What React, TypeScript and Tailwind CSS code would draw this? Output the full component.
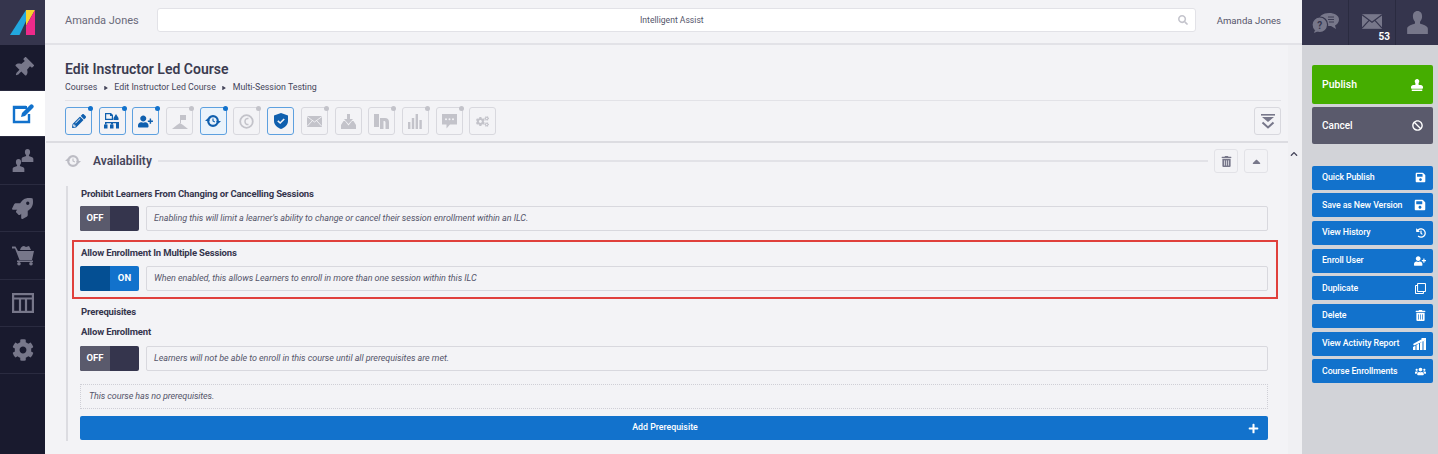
import { FaCog, FaPencilAlt, FaUserPlus, FaHistory, FaTrashAlt, FaCaretUp, FaChevronUp, FaSearch, FaBan, FaStamp, FaSave, FaRegClone, FaPlus, FaPlay, FaUsers, FaThumbtack, FaRocket, FaCogs } from "react-icons/fa";
import type { ReactNode } from "react";

function Logo() {
  return (
    <svg width="25" height="27" viewBox="0 0 25 27">
      <polygon points="0,26 9.5,26 16,12 16,1" fill="#22a7de" />
      <polygon points="16,1 25,1 16,17" fill="#f6d32d" />
      <polygon points="16,17 25,1 25,26 16,26" fill="#ee2a8a" />
    </svg>
  );
}

// head and shoulders, used all over the app
function Bust({ size = 20, x = 0, y = 0 }: { size?: number; x?: number; y?: number }) {
  return (
    <svg x={x} y={y} width={size} height={size} viewBox="0 0 20 20" fill="currentColor">
      <path d="M10 0c-2.600 0-4 2-4 4.600 0 2 .7 3.600 1.800 4.700v1.600C6 12 1 12.400 1 15.500V20h18v-4.500c0-3.100-5-3.500-6.800-4.600V9.300C13.300 8.200 14 6.600 14 4.600 14 2 12.600 0 10 0z" />
    </svg>
  );
}

function TwoBusts() {
  return (
    <svg width="22" height="23" viewBox="0 0 22 23" fill="currentColor">
      <Bust size={13} x={9} y={0} />
      <Bust size={13} x={0} y={10} />
    </svg>
  );
}

function EditBox() {
  return (
    <svg width="22" height="21" viewBox="0 0 22 21" fill="none">
      <path d="M17 11v8H2V4h12" stroke="currentColor" strokeWidth="2.400" />
      <path d="M1 3h14v3H1z" fill="currentColor" />
      <path d="M9 14l1-4 8-8c1-1 2-1 3 0s1 2 0 3l-8 8z" fill="currentColor" />
    </svg>
  );
}

function Cart() {
  return (
    <svg width="22" height="21" viewBox="0 0 22 21" fill="currentColor">
      <path d="M0 1.500h3.500L6 6h16l-2 9H7.500L3 3.500H0z" />
      <path d="M8 5c1-3 2-4 4-4l2 1 3-1 2 4z" />
      <path d="M5 15.500h16v1.500H5z" />
      <circle cx="7" cy="18.800" r="1.800" />
      <circle cx="19" cy="18.800" r="1.800" />
    </svg>
  );
}

function Columns() {
  return (
    <svg width="22" height="20" viewBox="0 0 22 20" fill="none" stroke="currentColor" strokeWidth="2.200">
      <rect x="1.100" y="1.100" width="19.800" height="17.800" />
      <path d="M1 5.500h20M8 5v14M14 5v14" />
    </svg>
  );
}

function SitemapDoc() {
  return (
    <svg width="16" height="16" viewBox="0 0 16 16" fill="currentColor">
      <path d="M1 0h6l2 2v5H1zM2.200 1.200v4.600h5.600V3H6V1.200z" fillRule="evenodd" />
      <path d="M12 1l2.500 4v2h-5V5z" />
      <path d="M1 9h13v1.200H9v1.300H7v-1.300H2.500v1.300H1z" />
      <rect x="0" y="11.500" width="3.500" height="4" />
      <rect x="6" y="11.500" width="3.500" height="4" />
      <rect x="12" y="9" width="3" height="6.500" />
    </svg>
  );
}

function FlagHill() {
  return (
    <svg width="16" height="15" viewBox="0 0 16 15" fill="currentColor">
      <path d="M8 1h6v5H9v3H8z" />
      <path d="M0 15l5-4 3-2 3 2 5 4z" />
    </svg>
  );
}

function SyncClock() {
  return (
    <svg width="16" height="14" viewBox="0 0 16 14" fill="none" stroke="currentColor">
      <circle cx="8" cy="7" r="4.800" strokeWidth="2.200" />
      <path d="M8 4.500V7l1.800 1" strokeWidth="1.100" />
      <path d="M0 7l2.500-2.500L5 7zM11 7l2.500 2.500L16 7z" fill="currentColor" stroke="none" />
    </svg>
  );
}

function Coin() {
  return (
    <svg width="15" height="15" viewBox="0 0 15 15" fill="none" stroke="currentColor">
      <circle cx="7.500" cy="7.500" r="6.300" strokeWidth="1.800" />
      <path d="M9.500 4.500C7.500 4 6 5.500 6 7.500s1.500 3.500 3.500 3" strokeWidth="1.500" />
    </svg>
  );
}

function Shield() {
  return (
    <svg width="14" height="16" viewBox="0 0 14 16" fill="currentColor">
      <path d="M7 0l7 2.500V8c0 4-3.500 6.800-7 8-3.500-1.200-7-4-7-8V2.500z" />
      <path d="M3.800 7.800L6.200 10l4-4" fill="none" stroke="#f3f3f6" strokeWidth="1.600" />
    </svg>
  );
}

function Mail({ w = 15, h = 11, stroke = "#f3f3f6" }: { w?: number; h?: number; stroke?: string }) {
  return (
    <svg width={w} height={h} viewBox="0 0 15 11" fill="currentColor">
      <rect width="15" height="11" />
      <path d="M0 .500l7.500 5.500L15 .500M0 10.500l5.500-6M15 10.500l-5.500-6" fill="none" stroke={stroke} strokeWidth="0.900" />
    </svg>
  );
}

function TrayDown() {
  return (
    <svg width="15" height="15" viewBox="0 0 15 15" fill="currentColor">
      <path d="M6 0h3v5h3L7.500 10 3 5h3z" />
      <path d="M2.500 7H4l3.500 4.500L11 7h1.500L15 11v4H0v-4z" />
    </svg>
  );
}

function LinkedBlock() {
  return (
    <svg width="15" height="15" viewBox="0 0 15 15" fill="currentColor">
      <rect x="0" y="0" width="5" height="13" />
      <path d="M6 4h5c2.500 0 4 1.500 4 4v7h-3.500V8.500c0-1-.5-1.500-1.500-1.500H9.500v8H6z" />
    </svg>
  );
}

function Bars() {
  return (
    <svg width="14" height="15" viewBox="0 0 14 15" fill="currentColor">
      <rect x="0" y="8" width="2.400" height="7" />
      <rect x="3.800" y="4" width="2.400" height="11" />
      <rect x="7.600" y="0" width="2.400" height="15" />
      <rect x="11.400" y="6" width="2.400" height="9" />
    </svg>
  );
}

function CommentBox() {
  return (
    <svg width="15" height="15" viewBox="0 0 15 15" fill="currentColor">
      <path d="M0 0h15v10.500H8L4.500 14.500v-4H0z" />
      <circle cx="4" cy="5.300" r="1" fill="#f3f3f6" />
      <circle cx="7.500" cy="5.300" r="1" fill="#f3f3f6" />
      <circle cx="11" cy="5.300" r="1" fill="#f3f3f6" />
    </svg>
  );
}

function DoubleDown() {
  return (
    <svg width="14" height="15" viewBox="0 0 14 15" fill="none" stroke="currentColor">
      <path d="M0 .800h14" strokeWidth="1.600" />
      <path d="M1 3h12L7 8z" fill="currentColor" stroke="none" />
      <path d="M1.500 8.500L7 13.500l5.500-5" strokeWidth="2" />
    </svg>
  );
}

function ChatHelp() {
  return (
    <svg width="27" height="21" viewBox="0 0 27 21" fill="currentColor">
      <path d="M7 8c0-4 4-7 10-7 5.500 0 10 2.500 10 6.500 0 3-2 5-4 6l1 3.500-5-3c-1 0-3 0-4-.5z" />
      <path d="M16 5h6M16 7.500h6M17 10h5" stroke="#35354d" strokeWidth="0.900" fill="none" />
      <circle cx="7.800" cy="12.800" r="7.800" stroke="#35354d" strokeWidth="1.200" />
      <path d="M3 18l-1 3 4-1.800z" />
      <text x="7.800" y="16.500" textAnchor="middle" fontSize="10" fontWeight="700" fill="#35354d" fontFamily="Roboto, sans-serif">?</text>
    </svg>
  );
}

function ActivityBars() {
  return (
    <svg width="13" height="12" viewBox="0 0 13 12" fill="currentColor">
      <path d="M0 9l2.500-1.500V12H0zM3.500 7l2.500-1.500V12H3.500zM7 5l2.500-1.500V12H7zM10.500 3L13 1.500V12h-2.500z" />
      <path d="M0 6l9-5-1-1h5v3.500l-1-1L1 7.500z" />
    </svg>
  );
}

const navItems = [
  { icon: <FaThumbtack size={20} className="rotate-45" />, h: "h-[46px]" },
  { icon: <EditBox />, h: "h-[46px]", active: true },
  { icon: <TwoBusts />, h: "h-[48px]" },
  { icon: <FaRocket size={21} />, h: "h-[47px]" },
  { icon: <Cart />, h: "h-[48px]" },
  { icon: <Columns />, h: "h-[47px]" },
  { icon: <FaCog size={22} />, h: "h-[47px]" },
];

const tools: { icon: ReactNode; on?: boolean; dot?: boolean; tint?: boolean }[] = [
  { icon: <FaPencilAlt size={14} />, on: true, dot: true },
  { icon: <SitemapDoc />, on: true, dot: true },
  { icon: <FaUserPlus size={15} />, on: true, dot: true },
  { icon: <FlagHill />, dot: true },
  { icon: <SyncClock />, on: true, dot: true, tint: true },
  { icon: <Coin />, dot: true },
  { icon: <Shield />, on: true },
  { icon: <Mail />, dot: true },
  { icon: <TrayDown /> },
  { icon: <LinkedBlock />, dot: true },
  { icon: <Bars />, dot: true },
  { icon: <CommentBox />, dot: true },
  { icon: <FaCogs size={13} /> },
];

const actions = [
  { label: "Quick Publish", icon: <FaSave size={11} /> },
  { label: "Save as New Version", icon: <FaSave size={12} /> },
  { label: "View History", icon: <FaHistory size={10} /> },
  { label: "Enroll User", icon: <FaUserPlus size={12} /> },
  { label: "Duplicate", icon: <FaRegClone size={11} /> },
  { label: "Delete", icon: <FaTrashAlt size={11} /> },
  { label: "View Activity Report", icon: <ActivityBars /> },
  { label: "Course Enrollments", icon: <FaUsers size={11} /> },
];

function Toggle({ on }: { on?: boolean }) {
  if (on) {
    return (
      <div className="flex h-[25px] w-[59px] shrink-0 overflow-hidden rounded-[2px] bg-[#1272cc] text-[9.5px] font-bold text-white">
        <div className="w-[30px] bg-[#044f93]" />
        <div className="flex flex-1 items-center justify-center">ON</div>
      </div>
    );
  }
  return (
    <div className="flex h-[25px] w-[59px] shrink-0 overflow-hidden rounded-[2px] bg-[#35354d] text-[9.5px] font-bold text-white">
      <div className="flex w-[30px] items-center justify-center bg-[#5a5a6c]">OFF</div>
    </div>
  );
}

function OptionRow({ on, text }: { on?: boolean; text: string }) {
  return (
    <div className="flex gap-[7px]">
      <Toggle on={on} />
      <div className="flex h-[25px] flex-1 items-center rounded-[2px] border border-[#d8d8de] px-[7px] text-[9px] italic tracking-[-0.05px] text-[#55556a]">
        {text}
      </div>
    </div>
  );
}

const fieldTitle = "pl-[1px] text-[9.5px] font-bold leading-[13px] tracking-[-0.15px] text-[#35354d]";

export default function App() {
  return (
    <div className="flex h-[454px] w-[1438px] overflow-hidden bg-[#f3f3f6] font-['Roboto',sans-serif] text-[#35354d]">
      <aside className="flex w-[45px] shrink-0 flex-col bg-[#191a2e] text-[#77778a]">
        <div className="flex h-[45px] items-center justify-center bg-[#35354d]">
          <Logo />
        </div>
        {navItems.map((item, i) => (
          <div
            key={i}
            className={`flex items-center justify-center border-b border-[#2a2b40] ${item.h} ${item.active ? "bg-white text-[#1272cc]" : ""}`}
          >
            {item.icon}
          </div>
        ))}
      </aside>

      <div className="flex min-w-0 flex-1 flex-col">
        <header className="flex h-[45px] shrink-0 items-center border-b-2 border-[#e2e2e7] pl-[20px] pr-[21px]">
          <span className="w-[92px] text-[11px] text-[#6a6a7a]">Amanda Jones</span>
          <div className="relative -mt-[3px] flex h-[24px] flex-1 items-center justify-center rounded-[3px] border border-[#e2e2e7] bg-white pr-[9px] text-[8.6px] text-[#55556a]">
            Intelligent Assist
            <FaSearch size={10} className="absolute right-[7px] top-[6px] text-[#c4c4cc]" />
          </div>
          <span className="ml-[21px] text-[9.6px] text-[#55556a]">Amanda Jones</span>
        </header>

        <div className="flex min-h-0 flex-1">
          <main className="min-w-0 flex-1">
            <div className="pl-[20px] pr-[7px]">
              <h1 className="mt-[15px] text-[14px] font-semibold leading-[18px] text-[#3b3b50]">Edit Instructor Led Course</h1>
              <div className="mt-[3px] flex items-center gap-[6.5px] text-[8.8px] leading-[13px] text-[#45455a]">
                <span>Courses</span>
                <FaPlay size={4} />
                <span>Edit Instructor Led Course</span>
                <FaPlay size={4} />
                <span>Multi-Session Testing</span>
              </div>
              <div className="mt-[6px] flex items-center gap-[6.7px] border-t border-[#e2e2e7] pt-[6px]">
                {tools.map((t, i) => (
                  <div
                    key={i}
                    className={`relative flex h-[28px] w-[27px] items-center justify-center rounded-[3px] border ${
                      t.on ? "border-[#5da0df] text-[#0f5fae]" : "border-[#d8d8de] text-[#c3c3ca]"
                    } ${t.tint ? "bg-[#eaf3fb]" : ""}`}
                  >
                    {t.icon}
                    {t.dot && (
                      <span className={`absolute -right-[2px] -top-[2px] h-[5px] w-[5px] rounded-full ${t.on ? "bg-[#1272cc]" : "bg-[#c3c3ca]"}`} />
                    )}
                  </div>
                ))}
                <div className="ml-auto flex h-[28px] w-[27px] items-center justify-center rounded-[3px] border border-[#d8d8de] text-[#77778a]">
                  <DoubleDown />
                </div>
              </div>
            </div>

            <div className="ml-[1px] mt-[6px] border-t-2 border-[#dcdce1] pl-[19px] pr-[20px]">
              <div className="flex h-[36px] items-center">
                <span className="text-[#bcbcc4]">
                  <SyncClock />
                </span>
                <span className="ml-[12px] text-[12px] font-semibold text-[#45455a]">Availability</span>
                <div className="ml-[6px] h-[2px] flex-1 bg-[#e2e2e7]" />
                <div className="ml-[6px] flex h-[24px] w-[24px] items-center justify-center rounded-[3px] border border-[#e2e2e7] text-[#77778a]">
                  <FaTrashAlt size={11} />
                </div>
                <div className="ml-[6px] flex h-[24px] w-[24px] items-center justify-center rounded-[3px] border border-[#e2e2e7] text-[#77778a]">
                  <FaCaretUp size={13} />
                </div>
              </div>

              <div className="ml-[1px] mt-[7px] border-l-2 border-[#dcdce1] pb-[1px] pl-[12px] pt-[1px]">
                <div className={fieldTitle}>Prohibit Learners From Changing or Cancelling Sessions</div>
                <div className="mt-[6px]">
                  <OptionRow text="Enabling this will limit a learner's ability to change or cancel their session enrollment within an ILC." />
                </div>

                <div className="-ml-[8px] -mr-[10px] mt-[9px] border-2 border-[#e0403c] pb-[6px] pl-[6px] pr-[8px] pt-[4px]">
                  <div className={fieldTitle}>Allow Enrollment In Multiple Sessions</div>
                  <div className="mt-[7px]">
                    <OptionRow on text="When enabled, this allows Learners to enroll in more than one session within this ILC" />
                  </div>
                </div>

                <div className={`mt-[6px] ${fieldTitle}`}>Prerequisites</div>
                <div className={`mt-[7px] ${fieldTitle}`}>Allow Enrollment</div>
                <div className="mt-[8px]">
                  <OptionRow text="Learners will not be able to enroll in this course until all prerequisites are met." />
                </div>
                <div className="mt-[13px] flex h-[25px] items-center border border-dotted border-[#cfcfd6] px-[8px] text-[9px] italic tracking-[-0.1px] text-[#55556a]">
                  This course has no prerequisites.
                </div>
                <div className="relative mt-[7px] flex h-[24px] items-center justify-center rounded-[2px] bg-[#1272cc] pr-[18px] text-[8.8px] font-medium text-white">
                  Add Prerequisite
                  <FaPlus size={11} className="absolute right-[9px] top-[7px]" />
                </div>
              </div>
            </div>
          </main>
          <div className="w-[14px] shrink-0 bg-[#f0f0f3] pl-[2px] pt-[105px] text-[#45455a]">
            <FaChevronUp size={8} />
          </div>
        </div>
      </div>

      <aside className="flex w-[136px] shrink-0 flex-col bg-[#d2d3d8]">
        <div className="flex h-[45px] bg-[#35354d] text-[#77778a]">
          <div className="flex w-[47px] items-center justify-center border-r border-[#2a2b40]">
            <ChatHelp />
          </div>
          <div className="relative flex w-[47px] items-center justify-center border-r border-[#2a2b40]">
            <div className="-mt-[2px]">
              <Mail w={20} h={15} stroke="#35354d" />
            </div>
            <span className="absolute bottom-[3px] right-[5px] text-[10px] font-bold leading-none text-white">53</span>
          </div>
          <div className="flex flex-1 items-center justify-center">
            <Bust size={23} />
          </div>
        </div>
        <div className="flex flex-col pl-[10px] pr-[5px] pt-[20px]">
          <div className="flex h-[39px] items-center justify-between rounded-[2px] bg-[#45ad00] pl-[10px] pr-[10px] text-[10.5px] font-medium text-white">
            Publish
            <FaStamp size={12} />
          </div>
          <div className="mt-[3px] flex h-[37px] items-center justify-between rounded-[2px] bg-[#5a5a6c] pl-[10px] pr-[10px] text-[10px] font-medium text-white">
            Cancel
            <FaBan size={11} />
          </div>
          <div className="mt-[21.5px] flex flex-col gap-[3.7px]">
            {actions.map((a) => (
              <div key={a.label} className="flex h-[24px] items-center justify-between rounded-[2px] bg-[#1272cc] pl-[10px] pr-[7px] text-[8.8px] font-medium tracking-[-0.1px] text-white">
                {a.label}
                {a.icon}
              </div>
            ))}
          </div>
        </div>
      </aside>
    </div>
  );
}
